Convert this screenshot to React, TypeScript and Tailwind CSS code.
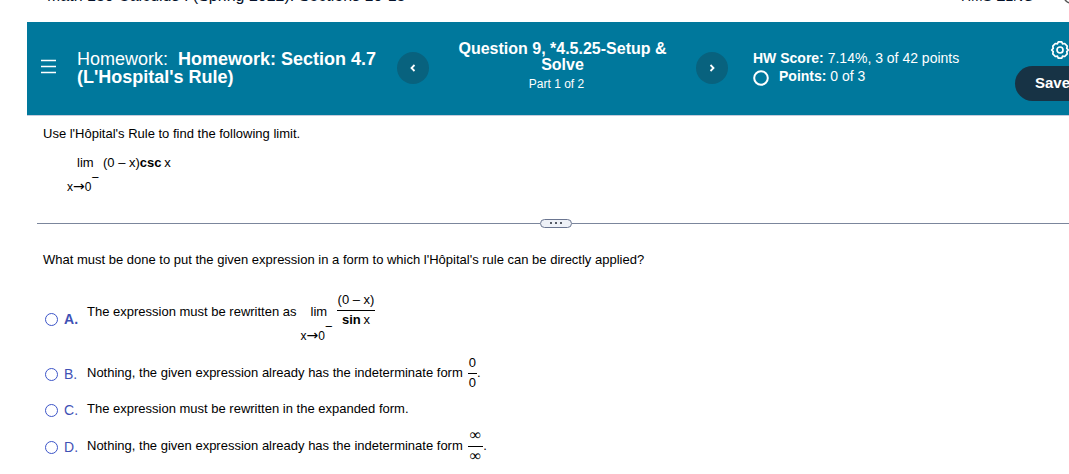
import { useState, type ReactNode } from "react";

function Limit() {
  return (
    <span className="flex flex-col">
      <span className="pl-[10px] leading-4">lim</span>
      <span className="mt-[7px] flex leading-4">
        <span className="text-xs leading-4">
          x<span className="font-['DejaVu_Sans',sans-serif] text-sm leading-4">→</span>0
        </span>
        <span className="-mt-2 leading-4">−</span>
      </span>
    </span>
  );
}

function Fraction({ top, bottom }: { top: ReactNode; bottom: ReactNode }) {
  return (
    <span className="inline-flex flex-col text-center">
      <span className="border-b border-black px-px pb-[2px] leading-4">{top}</span>
      <span className="px-px pt-px leading-4">{bottom}</span>
    </span>
  );
}

function Infinity() {
  return <span className="px-px font-['Liberation_Serif',serif] text-base leading-4">∞</span>;
}

function Choice({
  letter,
  selected,
  onSelect,
  bold,
  className,
  children,
}: {
  letter: string;
  selected: boolean;
  onSelect: () => void;
  bold?: boolean;
  className: string;
  children: ReactNode;
}) {
  return (
    <label className={`flex items-center ${className}`}>
      <input
        type="radio"
        name="answer"
        checked={selected}
        onChange={onSelect}
        className="mt-[2px] size-[13px] shrink-0 appearance-none rounded-full border border-[#3c55c8] checked:border-4"
      />
      <span className={`mt-[2px] ml-[6px] w-[23px] shrink-0 text-sm leading-4 text-[#3f51b5] ${bold ? "font-bold" : ""}`}>
        {letter}.
      </span>
      {children}
    </label>
  );
}

function Chevron({ d }: { d: string }) {
  return (
    <svg viewBox="0 0 8 10" className="h-[10px] w-2" fill="none" stroke="white" strokeWidth="1.8">
      <path d={d} />
    </svg>
  );
}

export default function App() {
  const [answer, setAnswer] = useState("");
  return (
    <div className="overflow-hidden bg-white font-['Liberation_Sans',Arial,sans-serif] text-[13px] text-black">
      <div className="flex h-[22px] items-start justify-between overflow-hidden pl-[47px] text-[#05112a]">
        <span className="-mt-3 text-base leading-4">Math 130 Calculus I (Spring 2022): Sections 10-13</span>
        <span className="-mt-3 mr-[-10px] flex shrink-0 items-start gap-[29px] text-sm leading-4">
          HMS ELNG
          <svg viewBox="0 0 16 16" className="size-4" fill="none" stroke="#555" strokeWidth="1.5">
            <circle cx="8" cy="8" r="7" />
          </svg>
        </span>
      </div>

      <header className="ml-[27px] flex h-[94px] border-b border-[#c5cbdc] bg-[#00789c] text-white">
        <button aria-label="Menu" className="mt-[37px] ml-[14px] h-[15px] w-[15px] shrink-0">
          <svg viewBox="0 0 15 15" className="size-[15px]" stroke="white" strokeWidth="1.6">
            <path d="M0 1.500h15M0 7.500h15M0 13.500h15" />
          </svg>
        </button>
        <h1 className="mt-7 ml-[21px] w-[320px] shrink-0 text-lg leading-[18px]">
          Homework:&nbsp; <b>Homework: Section 4.7 (L'Hospital's Rule)</b>
        </h1>
        <button aria-label="Previous question" className="mt-[30px] flex size-8 shrink-0 items-center justify-center rounded-full bg-[#08627e]">
          <Chevron d="M5.500 2 2.500 5 5.500 8" />
        </button>
        <div className="mt-[19px] flex w-[267px] shrink-0 flex-col items-center text-center">
          <h2 className="w-[220px] text-base leading-4 font-bold">Question 9, *4.5.25-Setup &amp; Solve</h2>
          <span className="mt-[3px] pr-3 text-xs leading-4">Part 1 of 2</span>
        </div>
        <button aria-label="Next question" className="mt-[30px] flex size-8 shrink-0 items-center justify-center rounded-full bg-[#08627e]">
          <Chevron d="M2.500 2 5.500 5 2.500 8" />
        </button>
        <div className="mt-[27px] ml-[25px] shrink-0 text-sm leading-[18px]">
          <div><b>HW Score:</b> 7.14%, 3 of 42 points</div>
          <div className="flex h-[18px] items-start">
            <svg viewBox="0 0 16 16" className="mt-[3px] mr-[10px] size-4" fill="none" stroke="white" strokeWidth="2">
              <circle cx="8" cy="8" r="6.800" />
            </svg>
            <span><b>Points:</b> 0 of 3</span>
          </div>
        </div>
        <div className="mr-[-31px] ml-auto flex w-[85px] shrink-0 flex-col items-center">
          <button aria-label="Settings" className="mt-[18px] mr-[-4px] size-5">
            <svg viewBox="0 0 20 20" className="size-5" fill="none" stroke="white" strokeWidth="1.7" strokeLinejoin="round">
              <path d="M8.300 1.800h3.400l.8 2 2.200-.3 2.500 2.600-.4 2.300 1.500 1.600-1.500 1.600.4 2.300-2.500 2.600-2.200-.3-.8 2H8.300l-.8-2-2.200.3-2.500-2.600.4-2.300L1.700 10l1.500-1.600-.4-2.300 2.500-2.600 2.200.3z" />
              <circle cx="10" cy="10" r="3" />
            </svg>
          </button>
          <button className="mt-[6px] h-[35px] w-full rounded-full bg-[#173345] pl-5 text-left text-[15px] font-bold">Save</button>
        </div>
      </header>

      <main className="pl-[37px]">
        <section className="pl-[6px]">
          <p className="pt-[10px] leading-4">Use l'Hôpital's Rule to find the following limit.</p>
          <div className="mt-[13px] ml-6 flex gap-1">
            <Limit />
            <span className="leading-4">(0 – x)<b>csc</b>&#8201;x</span>
          </div>
        </section>

        <div className="mt-[22px] flex h-3 items-center">
          <span className="h-px w-[503px] bg-[#7b869c]" />
          <button aria-label="Show more" className="flex h-[9px] w-8 items-center justify-center gap-[3px] rounded-full border border-[#6a7590] bg-[#eef1f7]">
            <i className="size-[2px] bg-[#555b66]" />
            <i className="size-[2px] bg-[#555b66]" />
            <i className="size-[2px] bg-[#555b66]" />
          </button>
          <span className="h-px flex-1 bg-[#7b869c]" />
        </div>

        <fieldset className="pl-[6px]">
          <legend className="pt-[23px] leading-4">
            What must be done to put the given expression in a form to which l'Hôpital's rule can be directly applied?
          </legend>
          <div className="pt-[23px] pl-[2px]">
            <Choice letter="A" bold selected={answer === "A"} onSelect={() => setAnswer("A")} className="h-[54px]">
              <span className="flex items-start">
                <span className="mt-3 leading-4">The expression must be rewritten as</span>
                <span className="mt-3 mr-1 ml-1"><Limit /></span>
                <Fraction top="(0 – x)" bottom={<><b>sin</b>&#8201;x</>} />
              </span>
            </Choice>
            <Choice letter="B" selected={answer === "B"} onSelect={() => setAnswer("B")} className="mt-[10px] h-9">
              <span className="flex items-center gap-[5px]">
                Nothing, the given expression already has the indeterminate form
                <span className="flex items-center"><Fraction top="0" bottom="0" />.</span>
              </span>
            </Choice>
            <Choice letter="C" selected={answer === "C"} onSelect={() => setAnswer("C")} className="h-9">
              The expression must be rewritten in the expanded form.
            </Choice>
            <Choice letter="D" selected={answer === "D"} onSelect={() => setAnswer("D")} className="mt-px h-9">
              <span className="flex items-center gap-[5px]">
                Nothing, the given expression already has the indeterminate form
                <span className="flex items-center"><Fraction top={<Infinity />} bottom={<Infinity />} />.</span>
              </span>
            </Choice>
          </div>
        </fieldset>
      </main>
    </div>
  );
}
